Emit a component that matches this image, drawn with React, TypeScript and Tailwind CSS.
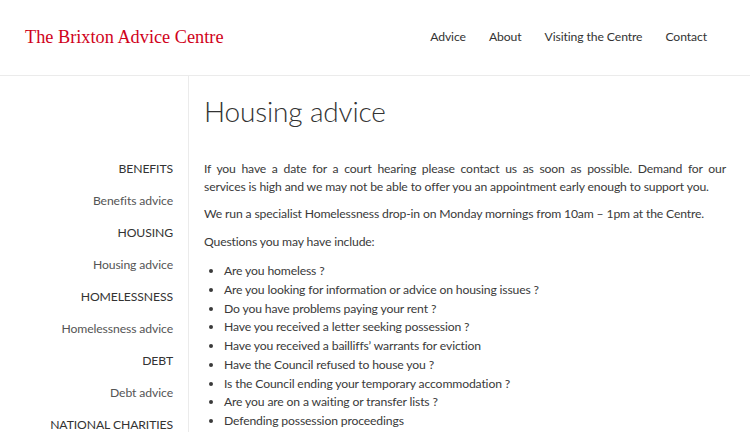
export default function App() {
  const sidebar = [
    { label: 'BENEFITS', heading: true },
    { label: 'Benefits advice' },
    { label: 'HOUSING', heading: true },
    { label: 'Housing advice' },
    { label: 'HOMELESSNESS', heading: true },
    { label: 'Homelessness advice' },
    { label: 'DEBT', heading: true },
    { label: 'Debt advice' },
    { label: 'NATIONAL CHARITIES', heading: true },
  ];

  const questions = [
    'Are you homeless ?',
    'Are you looking for information or advice on housing issues ?',
    'Do you have problems paying your rent ?',
    'Have you received a letter seeking possession ?',
    'Have you received a bailliffs’ warrants for eviction',
    'Have the Council refused to house you ?',
    'Is the Council ending your temporary accommodation ?',
    'Are you are on a waiting or transfer lists ?',
    'Defending possession proceedings',
  ];

  return (
    <div className="bg-white text-[#3a3a3a] font-['Lato',sans-serif] overflow-hidden h-[432px]">
      {/* Header */}
      <header className="h-[76px] border-b border-[#ebebeb] flex items-center justify-between pl-[25px] pr-[43px]">
        <a className="text-[18.3px] text-[#d0021b] font-['Liberation_Serif',serif]">
          The Brixton Advice Centre
        </a>
        <nav className="flex gap-[23px] text-[12.2px] tracking-[-0.1px] text-[#333]">
          <a>Advice</a>
          <a>About</a>
          <a>Visiting the Centre</a>
          <a>Contact</a>
        </nav>
      </header>

      <div className="flex">
        {/* Sidebar */}
        <aside className="w-[189px] h-[360px] shrink-0 border-r border-[#ebebeb] pr-[15px] pt-[77px] text-right text-[12.2px] tracking-[-0.1px]">
          <ul className="flex flex-col">
            {sidebar.map((item) => (
              <li
                key={item.label}
                className={`h-[32px] leading-[32px] ${item.heading ? 'text-[#333]' : 'text-[#555]'}`}
              >
                {item.label}
              </li>
            ))}
          </ul>
        </aside>

        {/* Main content */}
        <main className="flex-1 pl-[15px] pr-[24px] pt-[16px] text-[12.2px] tracking-[-0.15px] leading-[18px]">
          <h1 className="text-[28px] leading-[38px] font-light text-[#333] mb-[30px]">Housing advice</h1>
          <p className="mb-[9px]">
            <span className="block [text-align-last:justify]">
              If you have a date for a court hearing please contact us as soon as possible. Demand for our
            </span>
            <span className="block">
              services is high and we may not be able to offer you an appointment early enough to support you.
            </span>
          </p>
          <p className="mb-[10px]">
            We run a specialist Homelessness drop-in on Monday mornings from 10am – 1pm at the Centre.
          </p>
          <p className="mb-[11px]">Questions you may have include:</p>
          <ul className="list-disc pl-[20px]">
            {questions.map((q) => (
              <li key={q} className="leading-[18.75px]">
                {q}
              </li>
            ))}
          </ul>
        </main>
      </div>
    </div>
  );
}
